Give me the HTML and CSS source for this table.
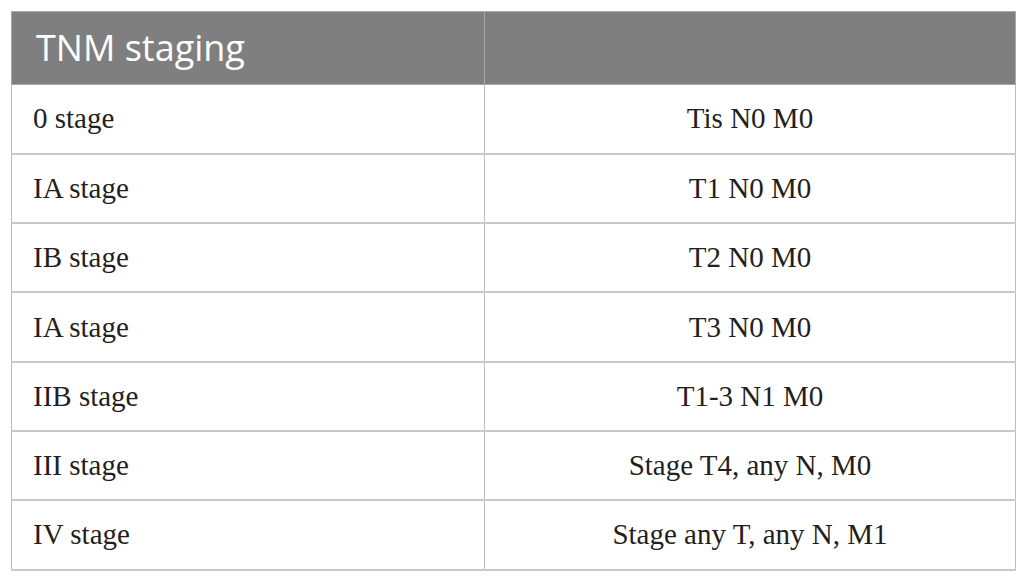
FILE: index.html
```html
<!DOCTYPE html>
<html>
<head>
<meta charset="utf-8">
<link rel="stylesheet" href="styles.css">
</head>
<body>
<table class="tnm">
  <thead>
    <tr><th class="c1">TNM staging</th><th class="c2"></th></tr>
  </thead>
  <tbody>
    <tr><td class="c1">0 stage</td><td class="c2">Tis N0 M0</td></tr>
    <tr><td class="c1">IA stage</td><td class="c2">T1 N0 M0</td></tr>
    <tr><td class="c1">IB stage</td><td class="c2">T2 N0 M0</td></tr>
    <tr><td class="c1">IA stage</td><td class="c2">T3 N0 M0</td></tr>
    <tr><td class="c1">IIB stage</td><td class="c2">T1-3 N1 M0</td></tr>
    <tr><td class="c1">III stage</td><td class="c2">Stage T4, any N, M0</td></tr>
    <tr><td class="c1">IV stage</td><td class="c2">Stage any T, any N, M1</td></tr>
  </tbody>
</table>
</body>
</html>
```
FILE: styles.css
```css
html, body {
  margin: 0;
  padding: 0;
  background: #ffffff;
}
body {
  padding: 11px 0 0 11px;
}
.tnm {
  border-collapse: collapse;
  width: 1005px;
  table-layout: fixed;
}
.tnm th {
  background: #7f7f7f;
  color: #ffffff;
  font-family: "Open Sans", sans-serif;
  font-weight: 400;
  font-size: 36px;
  text-align: left;
  height: 73px;
  padding: 0 0 2px 24px;
  border: 1px solid #a9a9a9;
  box-sizing: border-box;
}
.tnm th.c1 { width: 473px; }
.tnm td {
  font-family: "Liberation Serif", "Times New Roman", serif;
  font-size: 29px;
  color: #231f20;
  height: 69.3px;
  border-left: 1px solid #bdbdbd;
  border-right: 1px solid #bdbdbd;
  border-bottom: 2px solid #c9c9c9;
  padding: 0 0 0 21px;
  box-sizing: border-box;
}
.tnm td.c2 { text-align: center; padding: 0; }
```
